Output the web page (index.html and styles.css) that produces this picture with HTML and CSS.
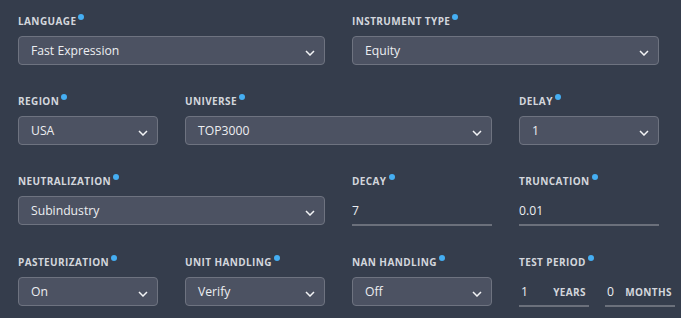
FILE: index.html
```html
<!DOCTYPE html>
<html lang="en">
<head>
    <meta charset="UTF-8">
    <meta name="viewport" content="width=device-width, initial-scale=1.0">
    <title>Simulation Settings</title>
    <link rel="stylesheet" href="styles.css">
</head>
<body>
    <main class="settings">
        <div class="field span-2">
            <label class="field-label">Language</label>
            <div class="select"><span>Fast Expression</span><svg class="chevron" viewBox="0 0 10 6"><path d="M1 1l4 4 4-4"/></svg></div>
        </div>
        <div class="field span-2">
            <label class="field-label">Instrument Type</label>
            <div class="select"><span>Equity</span><svg class="chevron" viewBox="0 0 10 6"><path d="M1 1l4 4 4-4"/></svg></div>
        </div>

        <div class="field">
            <label class="field-label">Region</label>
            <div class="select"><span>USA</span><svg class="chevron" viewBox="0 0 10 6"><path d="M1 1l4 4 4-4"/></svg></div>
        </div>
        <div class="field span-2">
            <label class="field-label">Universe</label>
            <div class="select"><span>TOP3000</span><svg class="chevron" viewBox="0 0 10 6"><path d="M1 1l4 4 4-4"/></svg></div>
        </div>
        <div class="field">
            <label class="field-label">Delay</label>
            <div class="select"><span>1</span><svg class="chevron" viewBox="0 0 10 6"><path d="M1 1l4 4 4-4"/></svg></div>
        </div>

        <div class="field span-2">
            <label class="field-label">Neutralization</label>
            <div class="select"><span>Subindustry</span><svg class="chevron" viewBox="0 0 10 6"><path d="M1 1l4 4 4-4"/></svg></div>
        </div>
        <div class="field">
            <label class="field-label">Decay</label>
            <div class="line-input">7</div>
        </div>
        <div class="field">
            <label class="field-label">Truncation</label>
            <div class="line-input">0.01</div>
        </div>

        <div class="field">
            <label class="field-label">Pasteurization</label>
            <div class="select"><span>On</span><svg class="chevron" viewBox="0 0 10 6"><path d="M1 1l4 4 4-4"/></svg></div>
        </div>
        <div class="field">
            <label class="field-label">Unit Handling</label>
            <div class="select"><span>Verify</span><svg class="chevron" viewBox="0 0 10 6"><path d="M1 1l4 4 4-4"/></svg></div>
        </div>
        <div class="field">
            <label class="field-label">NaN Handling</label>
            <div class="select"><span>Off</span><svg class="chevron" viewBox="0 0 10 6"><path d="M1 1l4 4 4-4"/></svg></div>
        </div>
        <div class="field">
            <label class="field-label">Test Period</label>
            <div class="period">
                <div class="line-input unit"><span>1</span><span class="unit-label">Years</span></div>
                <div class="line-input unit"><span>0</span><span class="unit-label">Months</span></div>
            </div>
        </div>
    </main>
</body>
</html>
```

FILE: styles.css
```css
body {
    margin: 0;
    padding: 0;
    background-color: #353d4c;
    font-family: "Open Sans", "Noto Sans", sans-serif;
    color: #eceef1;
    overflow: hidden;
}

.settings {
    display: grid;
    grid-template-columns: repeat(4, 140px);
    column-gap: 27px;
    row-gap: 29px;
    padding: 14px 0 0 18px;
}

.field {
    display: flex;
    flex-direction: column;
    min-width: 0;
}

.span-2 {
    grid-column: span 2;
}

.field-label {
    font-size: 10px;
    line-height: 14px;
    font-weight: 700;
    letter-spacing: 0.4px;
    text-transform: uppercase;
    color: #d3d6dc;
    margin-bottom: 8px;
    white-space: nowrap;
}

.field-label::after {
    content: "";
    display: inline-block;
    width: 6px;
    height: 6px;
    border-radius: 50%;
    background-color: #45aef2;
    margin-left: 2px;
    vertical-align: top;
}

.select {
    box-sizing: border-box;
    height: 29px;
    display: flex;
    align-items: center;
    justify-content: space-between;
    padding: 0 9px 0 12px;
    background-color: #4c5262;
    border: 1px solid #6e7380;
    border-radius: 4px;
    font-size: 12.2px;
}

.chevron {
    width: 10px;
    height: 6px;
    margin-top: 4px;
    fill: none;
    stroke: #f2f3f5;
    stroke-width: 1.5;
}

.line-input {
    box-sizing: border-box;
    height: 30px;
    display: flex;
    align-items: center;
    font-size: 12.2px;
    border-bottom: 2px solid #6b707b;
}

.period {
    display: flex;
    gap: 16px;
}

.line-input.unit {
    width: 70px;
    flex: none;
    justify-content: space-between;
    padding: 0 3px 0 2px;
}

.unit-label {
    font-size: 10px;
    font-weight: 700;
    letter-spacing: 0.4px;
    text-transform: uppercase;
    color: #d3d6dc;
    margin-top: 2px;
}
```
